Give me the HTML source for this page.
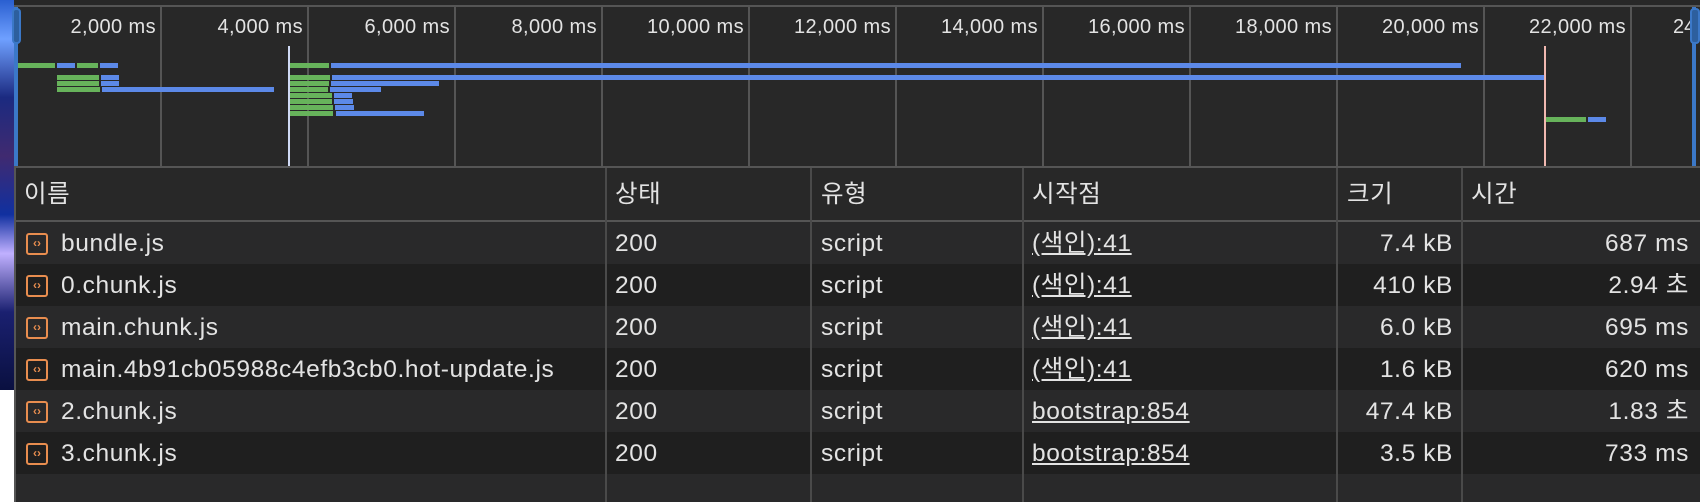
<!DOCTYPE html>
<html><head><meta charset="utf-8"><style>
*{margin:0;padding:0;box-sizing:border-box}
body{width:1700px;height:502px;background:#282828;overflow:hidden;position:relative;font-family:"Liberation Sans","Noto Sans CJK KR",sans-serif;color:#e3e3e3}
.a{position:absolute}
.strip{left:0;top:0;width:14px;height:390px;background:linear-gradient(180deg,#2a5fd0 0%,#6fa0ff 10%,#1b2a80 25%,#402a70 40%,#1030a0 55%,#c0b0ff 65%,#1a2070 80%,#0a1040 100%)}
.gl{width:2px;background:#555;top:6px;height:162px}
.lbl{top:16px;font-size:20px;letter-spacing:0.4px;color:#e3e3e3;text-align:right;width:142px;white-space:nowrap}
.g{background:#67b35b;height:5px}
.b{background:#5c89e8;height:5px}
.row{left:14px;width:1686px;height:42px;font-size:24.5px;letter-spacing:0.6px;line-height:44px}
.c{position:absolute;top:0;white-space:nowrap}
.r{text-align:right}
.u{text-decoration:underline}
.vl{width:2px;background:#4a4a4a;top:168px;height:334px}
.ic{position:absolute;left:12px;top:11px;width:22px;height:22px;border:2px solid #e88d4f;border-radius:3px;color:#e88d4f;font-size:12px;letter-spacing:0;line-height:17px;text-align:center;font-weight:bold}
</style></head><body>
<div class="a strip"></div>
<div class="a" style="left:0;top:390px;width:14px;height:112px;background:#fff"></div>
<div class="a" style="left:14px;top:5px;width:1686px;height:2px;background:#555"></div>
<div class="a gl" style="left:160px"></div><div class="a gl" style="left:307px"></div><div class="a gl" style="left:454px"></div><div class="a gl" style="left:601px"></div><div class="a gl" style="left:748px"></div><div class="a gl" style="left:895px"></div><div class="a gl" style="left:1042px"></div><div class="a gl" style="left:1189px"></div><div class="a gl" style="left:1336px"></div><div class="a gl" style="left:1483px"></div><div class="a gl" style="left:1630px"></div>
<div class="a lbl" style="left:14px">2,000 ms</div>
<div class="a lbl" style="left:161px">4,000 ms</div>
<div class="a lbl" style="left:308px">6,000 ms</div>
<div class="a lbl" style="left:455px">8,000 ms</div>
<div class="a lbl" style="left:602px">10,000 ms</div>
<div class="a lbl" style="left:749px">12,000 ms</div>
<div class="a lbl" style="left:896px">14,000 ms</div>
<div class="a lbl" style="left:1043px">16,000 ms</div>
<div class="a lbl" style="left:1190px">18,000 ms</div>
<div class="a lbl" style="left:1337px">20,000 ms</div>
<div class="a lbl" style="left:1484px">22,000 ms</div>
<div class="a" style="left:1673px;top:16px;font-size:20px">24</div>
<div class="a" style="left:14px;top:7px;width:4px;height:161px;background:#3b78c8"></div>
<div class="a" style="left:12px;top:8px;width:9px;height:36px;border:2px solid #3b78c8;border-radius:4px;background:#2d5f9e"></div>
<div class="a" style="left:1692px;top:7px;width:4px;height:161px;background:#3b78c8"></div>
<div class="a" style="left:1690px;top:8px;width:10px;height:36px;border:2px solid #3b78c8;border-radius:4px;background:#2d5f9e"></div>
<div class="a" style="left:288px;top:46px;width:2px;height:122px;background:#d0daf5"></div>
<div class="a" style="left:1544px;top:46px;width:2px;height:122px;background:#f0b8b0"></div>
<div class="a g" style="left:18px;top:63px;width:37px"></div><div class="a b" style="left:57px;top:63px;width:18px"></div><div class="a g" style="left:77px;top:63px;width:21px"></div><div class="a b" style="left:100px;top:63px;width:18px"></div>
<div class="a g" style="left:57px;top:75px;width:42px"></div><div class="a b" style="left:101px;top:75px;width:18px"></div>
<div class="a g" style="left:57px;top:81px;width:42px"></div><div class="a b" style="left:101px;top:81px;width:18px"></div>
<div class="a g" style="left:57px;top:87px;width:43px"></div><div class="a b" style="left:102px;top:87px;width:172px"></div>
<div class="a g" style="left:290px;top:63px;width:39px"></div><div class="a b" style="left:331px;top:63px;width:1130px"></div>
<div class="a g" style="left:290px;top:75px;width:40px"></div><div class="a b" style="left:332px;top:75px;width:1212px"></div>
<div class="a g" style="left:290px;top:81px;width:39px"></div><div class="a b" style="left:331px;top:81px;width:108px"></div>
<div class="a g" style="left:290px;top:87px;width:38px"></div><div class="a b" style="left:330px;top:87px;width:51px"></div>
<div class="a g" style="left:290px;top:93px;width:42px"></div><div class="a b" style="left:334px;top:93px;width:18px"></div>
<div class="a g" style="left:290px;top:99px;width:42px"></div><div class="a b" style="left:334px;top:99px;width:19px"></div>
<div class="a g" style="left:290px;top:105px;width:43px"></div><div class="a b" style="left:335px;top:105px;width:19px"></div>
<div class="a g" style="left:290px;top:111px;width:43px"></div><div class="a b" style="left:336px;top:111px;width:88px"></div>
<div class="a g" style="left:1546px;top:117px;width:40px"></div><div class="a b" style="left:1588px;top:117px;width:18px"></div>
<div class="a" style="left:14px;top:166px;width:1686px;height:2px;background:#555"></div>
<div class="a row" style="top:168px;height:53px;line-height:54px;background:#282828">
<span class="c" style="left:10px">이름</span><span class="c" style="left:601px">상태</span><span class="c" style="left:807px">유형</span><span class="c" style="left:1018px">시작점</span><span class="c" style="left:1333px">크기</span><span class="c" style="left:1457px">시간</span></div>
<div class="a" style="left:14px;top:220px;width:1686px;height:2px;background:#555"></div>
<div class="a" style="left:14px;top:222px;width:1686px;height:280px;background:#282828"></div>
<div class="a row" style="top:222px;background:#29292a"><div class="ic">‹›</div><span class="c" style="left:47px">bundle.js</span><span class="c" style="left:601px">200</span><span class="c" style="left:807px">script</span><span class="c u" style="left:1018px">(색인):41</span><span class="c r" style="right:247px">7.4 kB</span><span class="c r" style="right:11px">687 ms</span></div>
<div class="a row" style="top:264px;background:#1f1f1f"><div class="ic">‹›</div><span class="c" style="left:47px">0.chunk.js</span><span class="c" style="left:601px">200</span><span class="c" style="left:807px">script</span><span class="c u" style="left:1018px">(색인):41</span><span class="c r" style="right:247px">410 kB</span><span class="c r" style="right:11px">2.94 초</span></div>
<div class="a row" style="top:306px;background:#29292a"><div class="ic">‹›</div><span class="c" style="left:47px">main.chunk.js</span><span class="c" style="left:601px">200</span><span class="c" style="left:807px">script</span><span class="c u" style="left:1018px">(색인):41</span><span class="c r" style="right:247px">6.0 kB</span><span class="c r" style="right:11px">695 ms</span></div>
<div class="a row" style="top:348px;background:#1f1f1f"><div class="ic">‹›</div><span class="c" style="left:47px">main.4b91cb05988c4efb3cb0.hot-update.js</span><span class="c" style="left:601px">200</span><span class="c" style="left:807px">script</span><span class="c u" style="left:1018px">(색인):41</span><span class="c r" style="right:247px">1.6 kB</span><span class="c r" style="right:11px">620 ms</span></div>
<div class="a row" style="top:390px;background:#29292a"><div class="ic">‹›</div><span class="c" style="left:47px">2.chunk.js</span><span class="c" style="left:601px">200</span><span class="c" style="left:807px">script</span><span class="c u" style="left:1018px">bootstrap:854</span><span class="c r" style="right:247px">47.4 kB</span><span class="c r" style="right:11px">1.83 초</span></div>
<div class="a row" style="top:432px;background:#1f1f1f"><div class="ic">‹›</div><span class="c" style="left:47px">3.chunk.js</span><span class="c" style="left:601px">200</span><span class="c" style="left:807px">script</span><span class="c u" style="left:1018px">bootstrap:854</span><span class="c r" style="right:247px">3.5 kB</span><span class="c r" style="right:11px">733 ms</span></div>
<div class="a" style="left:14px;top:474px;width:1686px;height:28px;background:#29292a"></div>
<div class="a vl" style="left:14px;background:#555"></div>
<div class="a vl" style="left:605px"></div><div class="a vl" style="left:810px"></div><div class="a vl" style="left:1022px"></div><div class="a vl" style="left:1336px"></div><div class="a vl" style="left:1461px"></div>
</body></html>
